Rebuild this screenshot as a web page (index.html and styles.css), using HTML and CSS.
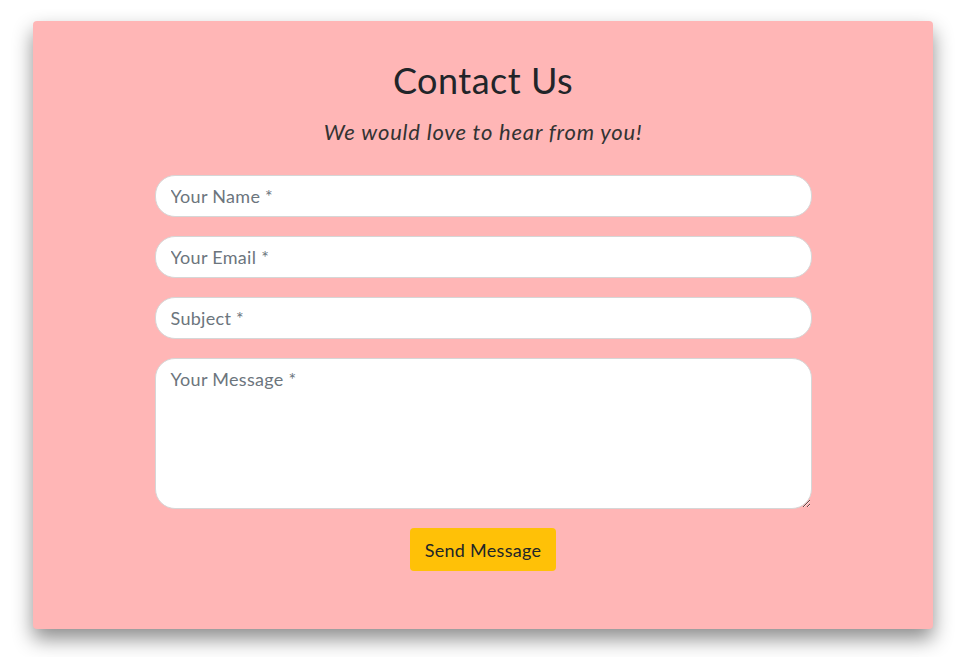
FILE: index.html
```html
<!DOCTYPE html>
<html>
<head>
<meta charset="utf-8">
<link rel="stylesheet" href="styles.css">
</head>
<body>
<div class="card">
  <h1 class="title">Contact Us</h1>
  <p class="subtitle">We would love to hear from you!</p>
  <form class="form">
    <input class="field" type="text" placeholder="Your Name *">
    <input class="field" type="email" placeholder="Your Email *">
    <input class="field" type="text" placeholder="Subject *">
    <textarea class="field area" placeholder="Your Message *"></textarea>
    <button class="send" type="button">Send Message</button>
  </form>
</div>
</body>
</html>
```
FILE: styles.css
```css
html, body { margin: 0; padding: 0; background: #fff; }
html { height: 100%; overflow: hidden; }
body {
  height: 100%;
  box-sizing: border-box;
  padding-top: 21px;
  font-family: "Lato", "Noto Sans", sans-serif;
  color: #212529;
}
.card {
  width: 900px;
  height: 608px;
  margin-left: 33px;
  box-sizing: border-box;
  background: #ffb6b6;
  border-radius: 4px;
  box-shadow: 0 10px 20px rgba(0,0,0,0.45);
  padding-top: 41px;
  display: flex;
  flex-direction: column;
  align-items: center;
}
.title {
  margin: 0;
  font-size: 36px;
  font-weight: 400;
  line-height: 1;
  letter-spacing: 0.5px;
}
.subtitle {
  margin: 21px 0 0;
  font-size: 22px;
  font-style: italic;
  line-height: 1.2;
  letter-spacing: 0.8px;
  color: #333;
}
.form {
  margin-top: 30px;
  width: 657px;
  display: flex;
  flex-direction: column;
  align-items: center;
  gap: 19px;
}
.field {
  width: 100%;
  height: 42px;
  box-sizing: border-box;
  border: 1px solid #d6d6d6;
  border-radius: 20px;
  background: #fff;
  padding: 0 15px;
  font-family: inherit;
  font-size: 18px;
  letter-spacing: 0.3px;
  color: #495057;
  outline: none;
}
.field::placeholder { color: #6c757d; }
.area {
  height: 151px;
  padding-top: 9px;
  resize: vertical;
}
.send {
  width: 146px;
  height: 43px;
  border: none;
  border-radius: 4px;
  background: #ffc107;
  color: #212529;
  font-family: inherit;
  font-size: 18px;
  letter-spacing: 0.3px;
}
```
